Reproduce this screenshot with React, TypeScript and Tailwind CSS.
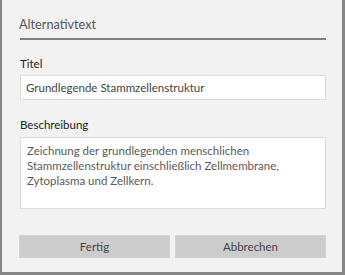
import React from 'react';

const App: React.FC = () => {
  return (
    <div
      className="w-[345px] h-[275px] bg-[#f2f2f2] border-l-2 border-r-[3px] border-b-[3px] border-[#858585] flex flex-col pl-[17px] pr-[16px]"
      style={{ fontFamily: 'Lato, "Noto Sans", sans-serif' }}
    >
      {/* Header */}
      <div className="pt-[14px] text-[12.7px] leading-[20px] text-[#555]">Alternativtext</div>
      <div className="mt-[4px] ml-[1px] h-[2px] bg-[#808080]" />

      {/* Titel */}
      <label className="mt-[16px] ml-[1px] text-[11.5px] leading-[16px] text-[#222]">Titel</label>
      <div className="mt-[3px] ml-[1px] h-[25px] bg-white border border-[#dcdcdc] flex items-center px-[5px] text-[11.5px] text-[#444]">
        Grundlegende Stammzellenstruktur
      </div>

      {/* Beschreibung */}
      <label className="mt-[17px] ml-[1px] text-[11.5px] leading-[16px] text-[#222]">Beschreibung</label>
      <div className="mt-[4px] ml-[1px] h-[72px] bg-white border border-[#dcdcdc] px-[6px] pt-[5px] text-[11.5px] leading-[15px] text-[#5a5a5a]">
        Zeichnung der grundlegenden menschlichen Stammzellenstruktur einschließlich Zellmembrane, Zytoplasma und Zellkern.
      </div>

      {/* Buttons */}
      <div className="mt-[26px] flex gap-[5px]">
        <button className="flex-1 h-[23px] bg-[#cccccc] border border-[#d2d2d2] text-[11.5px] text-[#444]">Fertig</button>
        <button className="flex-1 h-[23px] bg-[#cccccc] border border-[#d2d2d2] text-[11.5px] text-[#444]">Abbrechen</button>
      </div>
    </div>
  );
};

export default App;
